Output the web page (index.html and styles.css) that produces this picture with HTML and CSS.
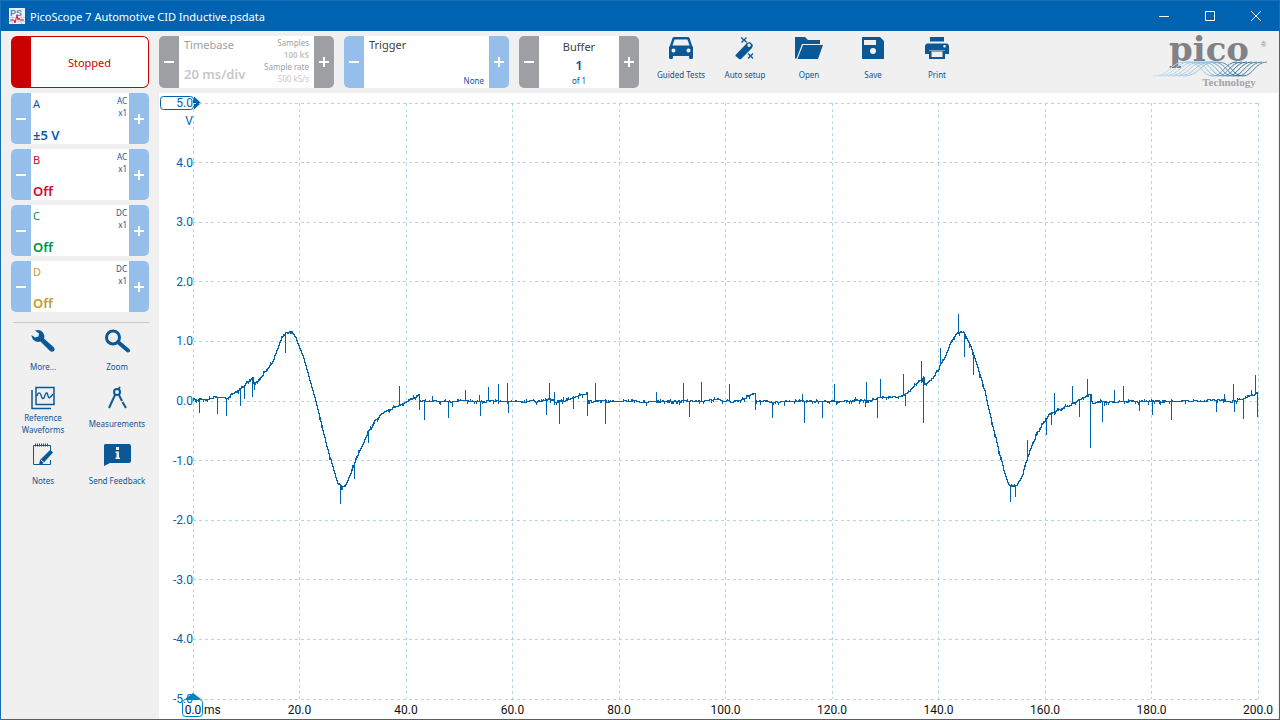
FILE: index.html
```
<!DOCTYPE html>
<html lang="en">

<head>
    <meta charset="UTF-8">
    <meta name="viewport" content="width=device-width, initial-scale=1.0">
    <title>PicoScope 7 Automotive CID Inductive.psdata</title>
    <link rel="stylesheet" href="styles.css">
</head>

<body>
    <header class="titlebar">
        <svg class="appIcon" width="16" height="16" viewBox="0 0 16 16">
            <rect width="16" height="16" fill="#eef2f6" />
            <text x="1" y="8" class="appIconText">PS</text>
            <path d="M0 9.5H16M0 13.5H16M3.5 8V16M12.5 8V16" stroke="#c9d3dd" />
            <path d="M1 12H5L6 15L8 7L9 12L10 10L11 12H15" fill="none" stroke="#e3173e" />
        </svg>
        <h1>PicoScope 7 Automotive CID Inductive.psdata</h1>
        <div class="winBtns">
            <button aria-label="Minimise"><svg width="12" height="12" viewBox="0 0 12 12"><path d="M1 6.5H11" /></svg></button>
            <button aria-label="Maximise"><svg width="12" height="12" viewBox="0 0 12 12"><path d="M1.5 1.5H10.5V10.5H1.5Z" /></svg></button>
            <button aria-label="Close"><svg width="12" height="12" viewBox="0 0 12 12"><path d="M1 1L11 11M11 1L1 11" /></svg></button>
        </div>
    </header>

    <div class="toolbar">
        <button class="stopped"><span>Stopped</span></button>
        <div class="panel grey timebase">
            <button class="step" aria-label="Timebase down"></button>
            <div class="panelBody">
                <div class="col">
                    <span class="name">Timebase</span>
                    <strong>20 ms/div</strong>
                </div>
                <div class="col small samples">
                    <span>Samples</span>
                    <b>100 kS</b>
                    <span>Sample rate</span>
                    <i>500 kS/s</i>
                </div>
            </div>
            <button class="step plus" aria-label="Timebase up"></button>
        </div>
        <div class="panel trigger">
            <button class="step" aria-label="Trigger down"></button>
            <div class="panelBody">
                <span class="name">Trigger</span>
                <span class="small none">None</span>
            </div>
            <button class="step plus" aria-label="Trigger up"></button>
        </div>
        <div class="panel grey buffer">
            <button class="step" aria-label="Previous buffer"></button>
            <div class="panelBody">
                <span class="name">Buffer</span>
                <strong>1</strong>
                <span class="small">of 1</span>
            </div>
            <button class="step plus" aria-label="Next buffer"></button>
        </div>
        <nav class="actions">
            <button class="tool">
                <svg width="28" height="24" viewBox="0 0 28 24">
                    <path fill-rule="evenodd" d="M5.500 2Q6 1 7.500 1H20.500Q22 1 22.500 2L25 9.500L26 11V21.500Q26 23 24.500 23H23.500Q22 23 22 21.500V20H6V21.500Q6 23 4.500 23H3.500Q2 23 2 21.500V11L3 9.500ZM7.500 3.500L5.500 9.500H22.500L20.500 3.500ZM6.500 12.500A2 2 0 1 0 6.500 16.500A2 2 0 1 0 6.500 12.500ZM21.500 12.500A2 2 0 1 0 21.500 16.500A2 2 0 1 0 21.500 12.500Z" />
                </svg>
                Guided Tests
            </button>
            <button class="tool">
                <svg width="28" height="24" viewBox="0 0 28 24">
                    <path fill-rule="evenodd" d="M4.500 19L16 7L19 6L22 9L21 12L9.500 23.500Q8.500 23.500 4.500 20ZM18 7.500A1.700 1.700 0 1 0 18.100 11A1.700 1.700 0 1 0 18 7.500Z" />
                    <path class="line thin" d="M10 1.500L16 6.500M15.500 1.500L10.500 6.500M17 17.500L22 22.500M22 17.500L17 22.500" />
                </svg>
                Auto setup
            </button>
            <button class="tool">
                <svg width="28" height="24" viewBox="0 0 28 24">
                    <path d="M0 1H10L13 4H25V8H7L1.500 22.500H0Z" />
                    <path d="M8 9H28L23 23H2.500Z" />
                </svg>
                Open
            </button>
            <button class="tool">
                <svg width="28" height="24" viewBox="0 0 28 24">
                    <path fill-rule="evenodd" d="M3 1H21L25 5V23H3ZM5 4V9H17V4ZM14 12A3 3 0 1 0 14 18A3 3 0 1 0 14 12Z" />
                </svg>
                Save
            </button>
            <button class="tool">
                <svg width="28" height="24" viewBox="0 0 28 24">
                    <path d="M7 1H21V5.500H7Z" />
                    <path fill-rule="evenodd" d="M5 7.500H23Q26 7.500 26 10.500V18H22V14H6V18H2V10.500Q2 7.500 5 7.500ZM21.500 9A1.300 1.300 0 1 0 21.600 11.600A1.300 1.300 0 1 0 21.500 9Z" />
                    <path fill-rule="evenodd" d="M6 14.500H22V23H6ZM8.500 15.500V21H19.500V15.500Z" />
                </svg>
                Print
            </button>
        </nav>
        <svg class="logo" width="120" height="56" viewBox="0 0 120 56" role="img" aria-label="Pico Technology">
            <text x="60" y="26" class="logoName">pico</text>
            <text x="112" y="12" class="logoMark">®</text>
            <g id="waves" fill="none" stroke-width="1"></g>
            <text x="80" y="51" class="logoSub">Technology</text>
        </svg>
    </div>

    <aside class="sidebar">
        <div class="panel chA">
            <button class="step" aria-label="A range down"></button>
            <div class="panelBody">
                <div class="col"><span class="name">A</span><strong>±5 V</strong></div>
                <div class="col small probe"><span>AC</span><span>x1</span></div>
            </div>
            <button class="step plus" aria-label="A range up"></button>
        </div>
        <div class="panel chB">
            <button class="step" aria-label="B range down"></button>
            <div class="panelBody">
                <div class="col"><span class="name">B</span><strong>Off</strong></div>
                <div class="col small probe"><span>AC</span><span>x1</span></div>
            </div>
            <button class="step plus" aria-label="B range up"></button>
        </div>
        <div class="panel chC">
            <button class="step" aria-label="C range down"></button>
            <div class="panelBody">
                <div class="col"><span class="name">C</span><strong>Off</strong></div>
                <div class="col small probe"><span>DC</span><span>x1</span></div>
            </div>
            <button class="step plus" aria-label="C range up"></button>
        </div>
        <div class="panel chD">
            <button class="step" aria-label="D range down"></button>
            <div class="panelBody">
                <div class="col"><span class="name">D</span><strong>Off</strong></div>
                <div class="col small probe"><span>DC</span><span>x1</span></div>
            </div>
            <button class="step plus" aria-label="D range up"></button>
        </div>
        <nav class="tools">
            <button class="tool">
                <svg width="28" height="24" viewBox="0 0 28 24">
                    <path d="M6 1.500Q11 0 14 3.500Q16 6.500 15 9.500L25 18.500Q26.500 20.500 25 22Q23 23.500 21 22L11.500 12.500Q7 14 4 10.500Q2.500 8.500 2.500 6L6 8.500L9.500 7.500L10 4.500Z" />
                </svg>
                <span>More...</span>
            </button>
            <button class="tool">
                <svg width="28" height="24" viewBox="0 0 28 24">
                    <circle class="line" cx="10" cy="8.500" r="6.500" stroke-width="3" />
                    <path class="line" d="M15.500 13.500L25 21.500" stroke-width="4" stroke-linecap="round" />
                </svg>
                <span>Zoom</span>
            </button>
            <button class="tool">
                <svg width="28" height="24" viewBox="0 0 28 24">
                    <path class="line" d="M7 1.500H25V18.500H7ZM3 4V22.500H22" stroke-width="1.500" />
                    <path class="line" d="M8 10C9 6 11 6 12 9C13 13 14 13 15 12C17 6 18 5 19 10C20 13 21 12 24 8" stroke-width="1.300" />
                </svg>
                <span>Reference Waveforms</span>
            </button>
            <button class="tool">
                <svg width="28" height="24" viewBox="0 0 28 24">
                    <circle class="line" cx="14" cy="6" r="3" stroke-width="2" />
                    <path class="line" d="M17 1L15.500 3M12 9L6 22M16 9L19 15M19.500 16L23 22" stroke-width="2" />
                </svg>
                <span>Measurements</span>
            </button>
            <button class="tool">
                <svg width="28" height="24" viewBox="0 0 28 24">
                    <path class="line" d="M21.500 8V2.500H4.500V21.500H21.500V17" stroke-width="1" />
                    <path class="line" d="M6 2H20" stroke-width="3" stroke-dasharray="1 1" />
                    <path d="M10 22L11 17L20.500 7.500Q22.500 7 24 9.500L14 20.500Z" />
                    <path d="M12 17L15 19.500" stroke="#f0f0f0" />
                </svg>
                <span>Notes</span>
            </button>
            <button class="tool">
                <svg width="28" height="24" viewBox="0 0 28 24">
                    <path fill-rule="evenodd" d="M2 1H26Q28 1 28 3V18Q28 20 26 20H7L1 23V2ZM13 4V7H16V4ZM12.500 8.500V10H13.500V14.500H12.500V16H17V14.500H16V8.500Z" />
                </svg>
                <span>Send Feedback</span>
            </button>
        </nav>
    </aside>

    <main class="scope">
        <div class="yAxis" id="yAxis"></div>
        <div class="plot">
            <!-- user units are one sample column wide -->
            <svg id="graph" viewBox="193 103 1065 596" preserveAspectRatio="none">
                <path id="grid" />
                <path id="trace" />
            </svg>
        </div>
        <div class="xAxis" id="xAxis"></div>
    </main>

    <script src="script.js"></script>
</body>

</html>
```
FILE: styles.css
```
* {
    box-sizing: border-box;
}

body {
    display: grid;
    grid-template: 30px 62px 1fr / 158px 1fr;
    margin: 0;
    min-height: 100vh;
    border: 1px solid #1870b8;
    background: #f0f0f0;
    color: #105493;
    font-family: "Noto Sans", "Open Sans", sans-serif;
    font-size: 11px;
}

button {
    padding: 0;
    border: 0;
    background: none;
    color: inherit;
    font: inherit;
}

/* title bar */
.titlebar {
    grid-column: 1 / 3;
    display: flex;
    align-items: center;
    padding-left: 8px;
    background: #0063b1;
    color: #fff;
}

.titlebar h1 {
    flex: 1;
    margin: 0 0 0 5px;
    font-size: 11px;
    font-weight: normal;
}

.appIconText {
    font: bold 9px "Liberation Sans", sans-serif;
    fill: #3a8fc9;
}

.winBtns {
    display: flex;
    height: 100%;
}

.winBtns button {
    width: 46px;
}

.winBtns svg {
    display: block;
    margin: 0 auto;
    fill: none;
    stroke: #fff;
}

/* top toolbar */
.toolbar {
    grid-column: 1 / 3;
    display: flex;
    align-items: flex-start;
    gap: 10px;
    padding: 5px 10px;
}

.stopped {
    display: flex;
    width: 138px;
    height: 52px;
    border: 1px solid #c80000;
    border-left-width: 20px;
    border-radius: 6px;
    background: #fff;
    color: #c80000;
}

.stopped span {
    margin: auto;
}

.panel {
    display: flex;
    height: 51px;
    border-radius: 5px;
    overflow: hidden;
    background: #fff;
}

.toolbar .panel {
    height: 52px;
}

.step {
    flex: 0 0 20px;
    background: linear-gradient(#fff, #fff) center / 10px 2px no-repeat #95bfea;
}

.step.plus {
    background: linear-gradient(#fff, #fff) center / 10px 2px no-repeat,
        linear-gradient(#fff, #fff) center / 2px 10px no-repeat #95bfea;
}

.grey .step {
    background-color: #9d9fa2;
}

.panelBody {
    flex: 1;
    display: flex;
    justify-content: space-between;
    padding: 2px 2px 1px;
}

.col {
    display: flex;
    flex-direction: column;
    justify-content: space-between;
}

.name {
    line-height: 16px;
}

.panel strong {
    font-size: 13px;
    font-weight: 600;
    line-height: 16px;
}

.small {
    font-size: 8px;
    line-height: 12px;
}

.timebase {
    width: 175px;
    color: #9d9fa2;
}

.timebase .panelBody {
    padding: 1px 5px 6px;
}

.timebase .col {
    white-space: nowrap;
}

.timebase strong,
.timebase b,
.timebase i {
    color: #c8c8c8;
    font-style: normal;
}

.samples,
.probe {
    justify-content: flex-start;
    text-align: right;
}

.trigger {
    width: 165px;
}

.trigger .panelBody {
    padding: 1px 5px;
}

.trigger .name,
.buffer .name {
    color: #404040;
}

.none {
    align-self: flex-end;
}

.buffer {
    width: 120px;
}

.buffer .panelBody {
    flex-direction: column;
    align-items: center;
    padding: 3px 2px 1px;
}

.actions {
    display: flex;
}

.tool {
    display: flex;
    flex-direction: column;
    align-items: center;
    font-size: 8px;
    line-height: 12px;
}

.tool svg {
    fill: #0b5896;
}

.tool .line {
    fill: none;
    stroke: #0b5896;
}

.tool .thin {
    stroke-width: 1.3;
}

.actions .tool {
    width: 64px;
    gap: 9px;
}

.logo {
    margin: -1px 0 0 auto;
    overflow: visible;
}

.logoName {
    font: bold 34px "DejaVu Serif", serif;
    text-anchor: middle;
    fill: #808285;
}

.logoMark {
    font: 7px "Liberation Sans", sans-serif;
    fill: #808285;
}

.logoSub {
    font: bold 11px "Liberation Serif", serif;
    text-anchor: middle;
    fill: #a3a5a8;
}

/* channels and tools */
.sidebar {
    display: flex;
    flex-direction: column;
    gap: 5px;
    padding-left: 10px;
    padding-right: 10px;
}

.sidebar .name {
    line-height: 18px;
}

.chA {
    color: #0a59a5;
}

.chB .name,
.chB strong {
    color: #e4002b;
}

.chC .name,
.chC strong {
    color: #009245;
}

.chD .name,
.chD strong {
    color: #c49a2c;
}

.tools {
    display: grid;
    grid-template-columns: 1fr 1fr;
    grid-auto-rows: 57px;
    margin: 5px -5px 0;
    position: relative;
    padding-top: 7px;
}

.tools::before {
    content: "";
    position: absolute;
    top: 0;
    left: 7px;
    right: 5px;
    border-top: 1px solid #c8c8c8;
}

.tools .tool {
    gap: 2px;
}

.tools svg {
    flex-shrink: 0;
}

.tools span {
    display: flex;
    align-items: center;
    height: 24px;
}

/* graph */
.scope {
    display: grid;
    grid-template: 1fr 20px / 34px 1fr;
    margin-right: 1px;
    padding: 10px 20px 0 0;
    background: #fff;
    font-family: Roboto, sans-serif;
    font-size: 12px;
}

.plot {
    position: relative;
}

#graph {
    position: absolute;
    width: 100%;
    height: 100%;
    overflow: visible;
}

#graph path {
    fill: none;
    stroke: #0062aa;
    vector-effect: non-scaling-stroke;
    shape-rendering: crispEdges;
}

#graph #grid {
    stroke: #add8e6;
    stroke-dasharray: 3 3;
}

.yAxis,
.xAxis {
    display: flex;
    justify-content: space-between;
}

.yAxis {
    flex-direction: column;
    color: #0062aa;
}

.yAxis span {
    position: relative;
    display: flex;
    align-items: center;
    justify-content: flex-end;
    height: 0;
}

.xAxis {
    grid-column: 2;
    color: #111;
    line-height: 22px;
}

.xAxis span {
    position: relative;
    display: flex;
    justify-content: center;
    width: 0;
}

/* trigger level and time handles over the axes */
.yHandle,
.xHandle {
    position: absolute;
    overflow: visible;
    fill: none;
    stroke: #0062aa;
}

.yHandle {
    left: 1px;
    top: -8px;
}

.xHandle {
    left: -12px;
    top: -6px;
    stroke: #0084c8;
}

.yAxis .unit {
    position: absolute;
    right: 0;
    top: 18px;
}

.xAxis .unit {
    position: absolute;
    left: 11px;
    width: auto;
}
```
FILE: script.js
```
let svgNS = "http://www.w3.org/2000/svg";
let yAxis = document.querySelector("#yAxis");
let xAxis = document.querySelector("#xAxis");

// axis labels
for (let v = 5; v >= -5; v--) {
    yAxis.innerHTML += "<span>" + v.toFixed(1) + "</span>";
}
for (let t = 0; t <= 200; t += 20) {
    xAxis.innerHTML += "<span>" + t.toFixed(1) + "</span>";
}
yAxis.firstChild.innerHTML += '<svg class="yHandle" width="42" height="16" viewBox="0 0 42 16">' +
    '<rect x="0.5" y="1.5" width="33" height="13" rx="3"/><path d="M34 1.500V14.500L41 8Z" fill="#0062aa" stroke="none"/></svg>' +
    '<span class="unit">V</span>';
xAxis.firstChild.innerHTML += '<svg class="xHandle" width="24" height="26" viewBox="0 0 24 26">' +
    '<rect x="1.5" y="6.500" width="20" height="17" rx="3"/><path d="M4 6L12 0L20 6Z" fill="#0084c8" stroke="none"/></svg>' +
    '<span class="unit">ms</span>';

// grid
let d = "";
for (let i = 0; i <= 10; i++) {
    let x = Math.floor(193 + i * 106.5) + 0.5;
    let y = Math.floor(103 + i * 59.6) + 0.5;
    d += "M" + x + " 103V699M193 " + y + "H1258";
}
document.querySelector("#grid").setAttribute("d", d);

// smooth part of the signal
let base = [
    [193, 400], [203, 399], [216, 397], [227, 397], [234, 393], [242, 387], [252, 378], [253, 384], [258, 379],
    [266, 370], [272, 360], [277, 348], [281, 338], [285, 332], [290, 331], [294, 335], [298, 345], [303, 358],
    [308, 376], [314, 397], [320, 421], [326, 447], [332, 467], [337, 483], [341, 487], [345, 484], [350, 473],
    [355, 459], [362, 444], [368, 430], [375, 420], [382, 412], [390, 408], [399, 405], [408, 400], [418, 395],
    [419, 401], [543, 401], [549, 398], [555, 401], [563, 401], [573, 397], [586, 393], [587, 401], [690, 401],
    [720, 399], [722, 401], [733, 401], [742, 398], [750, 394], [754, 394], [755, 401], [840, 401], [868, 400],
    [878, 398], [890, 396], [901, 396], [910, 390], [917, 382], [923, 377], [924, 384], [932, 378], [938, 368],
    [944, 357], [950, 343], [955, 334], [960, 331], [964, 333], [970, 346], [975, 361], [981, 380], [986, 399],
    [992, 426], [998, 450], [1003, 470], [1008, 484], [1012, 487], [1016, 484], [1022, 473], [1027, 455],
    [1034, 438], [1041, 425], [1048, 415], [1056, 410], [1070, 405], [1078, 400], [1085, 396], [1090, 395],
    [1091, 402], [1108, 401], [1200, 401], [1222, 399], [1224, 401], [1235, 401], [1243, 398], [1252, 394], [1257, 393]
];

// interference spikes
let spikes = [
    [199, 413], [217, 414], [226, 416], [240, 406], [244, 399], [252, 397], [254, 390], [285, 353], [340, 504],
    [354, 479], [368, 443], [399, 386], [419, 410], [424, 420], [432, 396], [448, 418], [452, 407], [465, 390],
    [479, 395], [480, 416], [488, 387], [498, 384], [507, 383], [508, 413], [546, 415], [549, 383], [554, 392],
    [559, 424], [563, 397], [573, 409], [586, 392], [587, 416], [595, 383], [605, 424], [656, 392], [683, 383],
    [689, 417], [701, 382], [729, 384], [755, 410], [772, 418], [784, 406], [802, 394], [804, 423], [822, 418],
    [834, 384], [865, 407], [866, 382], [877, 418], [880, 379], [903, 374], [905, 406], [921, 361], [923, 423],
    [940, 348], [958, 314], [964, 357], [973, 375], [1010, 502], [1015, 497], [1027, 440], [1046, 435], [1051, 425],
    [1054, 393], [1072, 386], [1079, 417], [1087, 379], [1090, 448], [1102, 422], [1114, 390], [1123, 386],
    [1139, 411], [1152, 415], [1171, 420], [1216, 412], [1224, 394], [1233, 384], [1234, 412], [1243, 419],
    [1251, 390], [1255, 375], [1257, 417]
];

// stretches where the noise is denser
let noisy = [[193, 206], [234, 260], [545, 562], [655, 680], [845, 868], [1145, 1165]];

let seed = 7;
function rand() {
    seed = (seed * 16807) % 2147483647;
    return seed / 2147483647;
}

let k = 0;
let shift = 0;
let hold = 0;
let path = "M193 400.5";
for (let x = 193; x <= 1257; x++) {
    while (base[k + 1][0] < x) k++;
    let a = base[k], b = base[k + 1];
    // small steps that last a few columns
    if (hold-- <= 0) {
        let s = rand();
        shift = s < 0.25 ? -1 : s < 0.4 ? 1 : 0;
        hold = Math.floor(rand() * 3);
    }
    let y = Math.round(a[1] + (b[1] - a[1]) * (x - a[0]) / (b[0] - a[0])) + shift + 0.5;
    path += "H" + (x + 0.5) + "V" + y;
    let dense = noisy.some(item => x >= item[0] && x <= item[1]);
    let r = rand();
    if (r < (dense ? 0.8 : 0.3)) {
        let up = rand() < 0.6 ? -1 : 1;
        path += "v" + up * (r < 0.06 ? 3 : 2) + "V" + y;
    }
    spikes.forEach(item => {
        if (item[0] == x) path += "V" + (item[1] - 0.5) + "V" + y;
    });
}
document.querySelector("#trace").setAttribute("d", path);

// logo waves, light to dark from left to right
let waves = document.querySelector("#waves");
for (let i = 0; i < 7; i++) {
    let p = document.createElementNS(svgNS, "path");
    let x = 4 + i * 5;
    p.setAttribute("d", "M" + x + " 41C" + (x + 18) + " 41 " + (x + 16) + " 27 " + (x + 32) + " 27H" + (x + 34) +
        "C" + (x + 50) + " 27 " + (x + 48) + " 41 " + (x + 60) + " 41C" + (x + 70) + " 41 " + (x + 72) + " 27 " + (x + 84) + " 27");
    p.setAttribute("stroke", "url(#fade)");
    waves.appendChild(p);
}
waves.insertAdjacentHTML("beforebegin", '<linearGradient id="fade" gradientUnits="userSpaceOnUse" x1="4" y1="0" x2="118" y2="0">' +
    '<stop offset="0" stop-color="#c5e2f5"/><stop offset="0.5" stop-color="#8fbfe2"/><stop offset="0.75" stop-color="#2c6d96"/><stop offset="1" stop-color="#5f93b5"/></linearGradient>');
```
